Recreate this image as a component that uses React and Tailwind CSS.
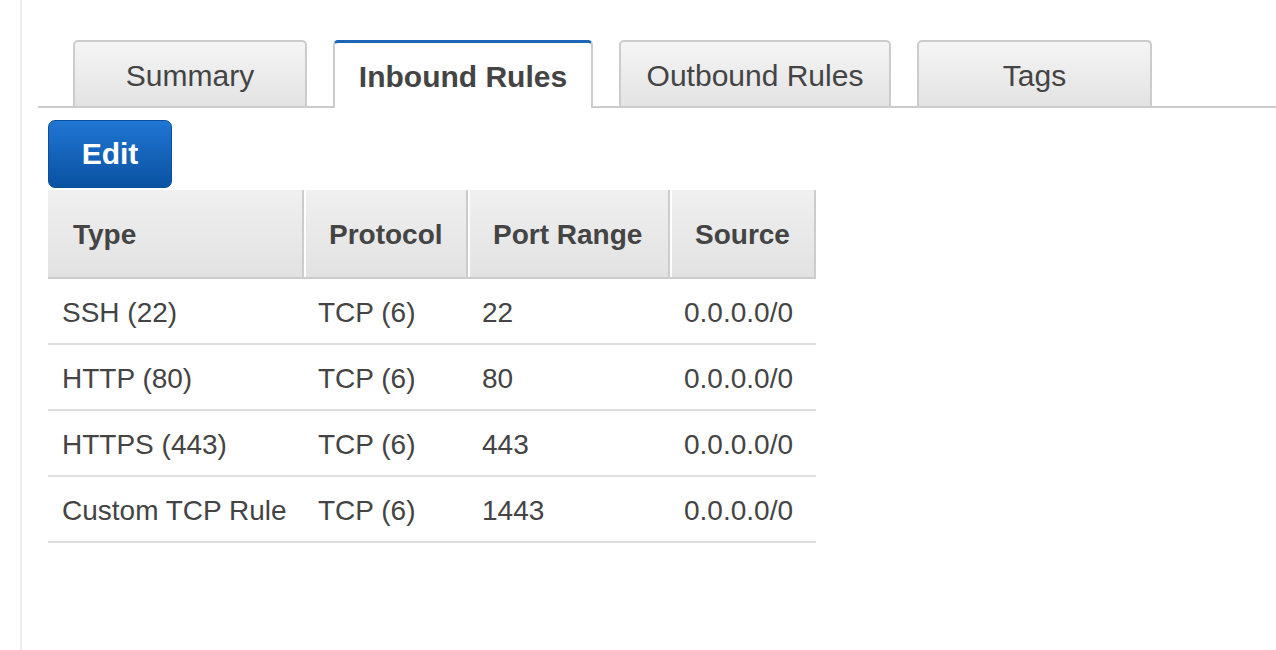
import React from 'react';

const tabs = [
  { label: 'Summary', width: 'w-[234px]' },
  { label: 'Inbound Rules', width: 'w-[260px]', active: true },
  { label: 'Outbound Rules', width: 'w-[272px]' },
  { label: 'Tags', width: 'w-[235px]' },
];

const rules = [
  { type: 'SSH (22)', protocol: 'TCP (6)', port: '22', source: '0.0.0.0/0' },
  { type: 'HTTP (80)', protocol: 'TCP (6)', port: '80', source: '0.0.0.0/0' },
  { type: 'HTTPS (443)', protocol: 'TCP (6)', port: '443', source: '0.0.0.0/0' },
  { type: 'Custom TCP Rule', protocol: 'TCP (6)', port: '1443', source: '0.0.0.0/0' },
];

const columns = ['Type', 'Protocol', 'Port Range', 'Source'];

const App = () => {
  return (
    <div className="min-h-screen bg-white font-['Liberation_Sans',Arial,sans-serif] text-[#444]">
      <div className="ml-[20px] min-h-[650px] border-l-2 border-[#eeeeee] pl-[16px] pt-[40px]">
        {/* Tabs */}
        <div className="flex gap-[26px] border-b-2 border-[#cccccc] pl-[35px]">
          {tabs.map((tab) =>
            tab.active ? (
              <div
                key={tab.label}
                className={`${tab.width} -mb-[2px] flex h-[68px] items-center justify-center rounded-t-[5px] border-x-2 border-t-[3px] border-x-[#cccccc] border-t-[#1d66b6] bg-white pt-[2px] text-[30px] font-bold text-[#444]`}
              >
                {tab.label}
              </div>
            ) : (
              <div
                key={tab.label}
                className={`${tab.width} flex h-[66px] items-center justify-center rounded-t-[5px] border-x-2 border-t-2 border-[#cccccc] bg-linear-to-b from-[#f5f5f5] to-[#e3e3e3] pt-[2px] text-[30px] text-[#444]`}
              >
                {tab.label}
              </div>
            )
          )}
        </div>

        {/* Edit button */}
        <div className="ml-[10px] mt-[12px]">
          <button className="flex h-[68px] w-[124px] items-center justify-center rounded-[7px] border border-[#0b4f9c] bg-linear-to-b from-[#1f76d3] to-[#0a52a2] pb-[2px] text-[30px] font-bold text-white">
            Edit
          </button>

          {/* Rules table */}
          <div className="mt-[2px] w-[768px]">
            <div className="grid grid-cols-[256px_164px_202px_146px] border-b-2 border-[#cccccc] bg-linear-to-b from-[#f0f0f0] to-[#e2e2e2]">
              {columns.map((col, i) => (
                <div
                  key={col}
                  className={`flex h-[87px] items-center border-r-2 border-r-[#cccccc] pt-[2px] text-[28px] font-bold text-[#444] ${
                    i === 0 ? 'pl-[25px]' : 'border-l-2 border-l-white pl-[23px]'
                  }`}
                >
                  {col}
                </div>
              ))}
            </div>
            {rules.map((rule) => (
              <div
                key={rule.type}
                className="grid h-[66px] grid-cols-[256px_164px_202px_146px] items-center border-b-2 border-[#dddddd] pt-[3px] text-[28px] text-[#444]"
              >
                <div className="pl-[14px] whitespace-nowrap">{rule.type}</div>
                <div className="pl-[14px] whitespace-nowrap">{rule.protocol}</div>
                <div className="pl-[14px] whitespace-nowrap">{rule.port}</div>
                <div className="pl-[14px] whitespace-nowrap">{rule.source}</div>
              </div>
            ))}
          </div>
        </div>
      </div>
    </div>
  );
};

export default App;
